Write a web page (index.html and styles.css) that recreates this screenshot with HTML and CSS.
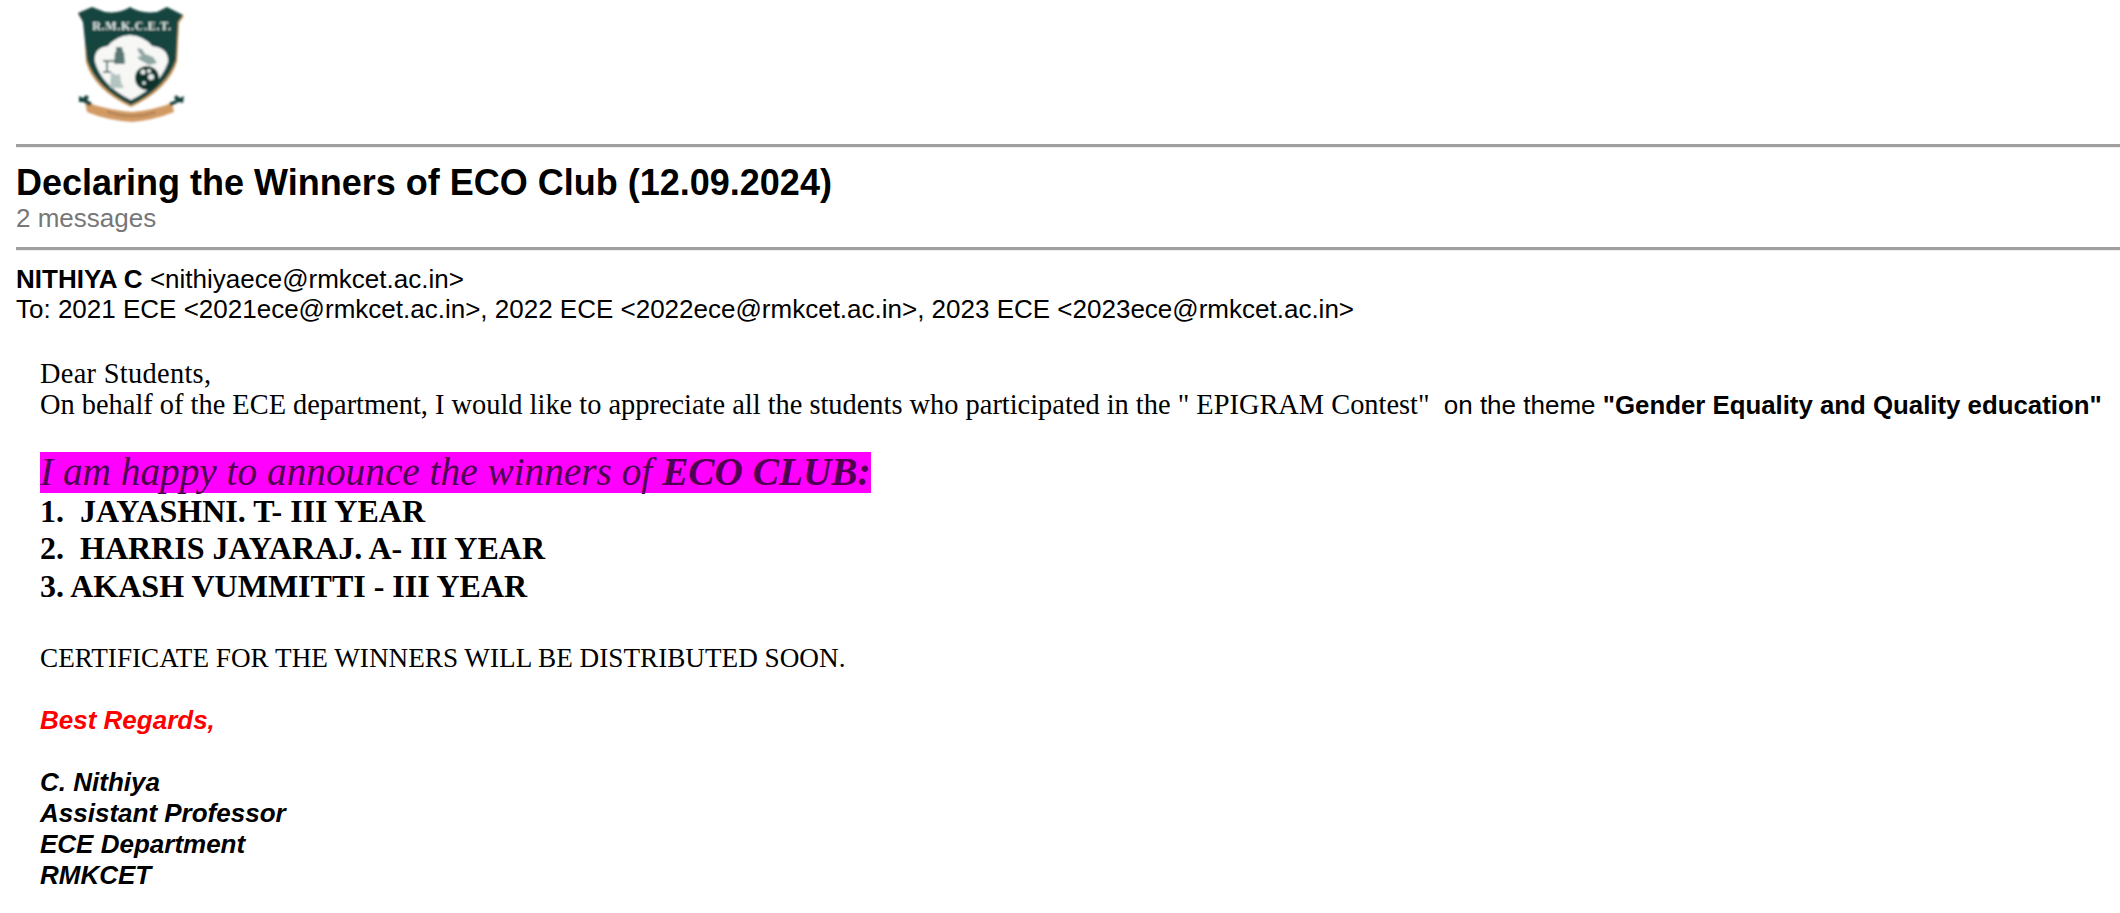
FILE: index.html
```html
<!DOCTYPE html>
<html lang="en">
<head>
<meta charset="utf-8">
<title>Declaring the Winners of ECO Club (12.09.2024)</title>
<link rel="stylesheet" href="styles.css">
</head>
<body>
<header class="logo-row">
<svg class="logo" width="170" height="130" viewBox="0 0 170 130" aria-label="RMKCET crest">
  <defs><filter id="soft"><feGaussianBlur stdDeviation="0.8"/></filter></defs>
  <g filter="url(#soft)">
    <path d="M28 14 L42 8 L55 13 Q70 15 81 8 Q92 15 107 13 L118 8 L134 16 L129 23 L127 62 Q118 90 81 107 Q44 90 36 62 L34 23 Z" fill="#c99a5e"/>
    <path d="M28 13 L42 7 L55 12 Q70 14 80 7 Q91 14 107 12 L117 7 L133 15 L128 22 L126 60 Q116 88 81 105 Q46 88 37 60 L33 22 Z" fill="#12443f"/>
    <path d="M45 62 Q43 48 58 46 Q66 36 80 35 Q94 36 102 46 Q119 48 118 62 Q110 86 81 100 Q52 86 45 62 Z" fill="#f7f8f6"/>
    <text x="82" y="30" class="crest-text">R.M.K.C.E.T.</text>
    <path d="M66 47 h6 l1 5 h1 l1 12 h-11 l1 -12 h1 Z" fill="#5a7772"/>
    <path d="M53 61 h12 M57 61 v11 M53 72 h8" stroke="#5a7772" stroke-width="2" fill="none"/>
    <path d="M87 48 l5 1 l3 5 l8 3 l4 6 l-8 2 l-9 -5 l-3 -3 l5 -1 l-3 -3 Z" fill="#8fa6a2"/>
    <path d="M61 72 l5 3 l4 -1 l1 8 l3 6 h-14 Z" fill="#b4c4c1"/>
    <circle cx="97" cy="78" r="12" fill="#10302c"/>
    <circle cx="93" cy="72" r="2.5" fill="#e5ebe9"/><circle cx="99" cy="71" r="2" fill="#e5ebe9"/><circle cx="101" cy="77" r="3" fill="#e5ebe9"/><circle cx="94" cy="83" r="1.8" fill="#e5ebe9"/>
    <path d="M35 102 Q58 110 82 112 Q104 110 122 103 L124 112 Q104 120 82 122 Q56 120 37 112 Z" fill="#d29a63"/>
    <path d="M58 112 Q82 120 106 112" stroke="#8a6a45" stroke-width="2" stroke-dasharray="2 1.5" fill="none"/>
    <path d="M29 96 l4 2 l3 -3 l3 2 l-2 3 l5 3 l-2 3 l-7 -4 l-4 0 Z M134 96 l-4 2 l-4 -3 l-2 3 l2 2 l-7 3 l2 3 l8 -4 l4 1 Z" fill="#17423d"/>
  </g>
</svg>
</header>
<hr class="rule">
<h1 class="subject">Declaring the Winners of ECO Club (12.09.2024)</h1>
<div class="count">2 messages</div>
<hr class="rule">
<div class="from"><b>NITHIYA C</b> &lt;nithiyaece@rmkcet.ac.in&gt;</div>
<div class="to">To: 2021 ECE &lt;2021ece@rmkcet.ac.in&gt;, 2022 ECE &lt;2022ece@rmkcet.ac.in&gt;, 2023 ECE &lt;2023ece@rmkcet.ac.in&gt;</div>
<main class="message">
  <p class="line dear">Dear Students,</p>
  <p class="line">On behalf of the ECE department, I would like to appreciate all the students who participated in the " EPIGRAM Contest"&nbsp; <span class="sans">on the theme <b class="theme">"Gender Equality and Quality education"</b></span></p>
  <p class="line">&nbsp;</p>
  <p class="announce"><mark class="highlight">I am happy to announce the winners of <b>ECO CLUB:</b></mark></p>
  <p class="winner">1.&nbsp; JAYASHNI. T- III YEAR</p>
  <p class="winner">2.&nbsp; HARRIS JAYARAJ. A- III YEAR</p>
  <p class="winner">3. AKASH VUMMITTI - III YEAR</p>
  <p class="line gap">&nbsp;</p>
  <p class="line caps">CERTIFICATE FOR THE WINNERS WILL BE DISTRIBUTED SOON.</p>
  <p class="line">&nbsp;</p>
  <p class="sig regards">Best Regards,</p>
  <p class="sig">&nbsp;</p>
  <p class="sig">C. Nithiya</p>
  <p class="sig">Assistant Professor</p>
  <p class="sig">ECE Department</p>
  <p class="sig">RMKCET</p>
</main>
</body>
</html>
```

FILE: styles.css
```css
html, body { margin: 0; padding: 0; background: #fff; overflow: hidden; }
body { padding-left: 16px; font-family: "Liberation Sans", Arial, sans-serif; color: #000; height: 913px; }
.logo-row { height: 144px; }
.logo { display: block; margin-left: 34px; }
.rule { border: 0; border-top: 3px solid #a0a0a0; border-bottom: 1px solid #eee; margin: 0; height: 0; }
.subject { margin: 0; padding-top: 15px; font-size: 36px; line-height: 39px; font-weight: bold; }
.count { font-size: 26px; line-height: 32px; color: #777; margin-bottom: 13px; }
.from, .to { font-size: 26px; line-height: 30px; }
.from { margin-top: 13px; }
.message { padding-left: 24px; margin-top: 34px; font-family: "Liberation Serif", "Times New Roman", serif; white-space: nowrap; }
.message p { margin: 0; }
.line { font-size: 28.4px; line-height: 31px; }
.dear { letter-spacing: 0.3px; }
.caps { font-size: 27.2px; }
.gap { line-height: 38.5px; }
.sans { font-family: "Liberation Sans", Arial, sans-serif; font-size: 26px; }
.theme { font-size: 25.8px; }
.announce { font-size: 39.3px; line-height: 41px; font-style: italic; }
.highlight { display: inline-block; background: #f0f; color: #500050; }
.winner { font-size: 32px; line-height: 37.3px; font-weight: bold; }
.sig { font-family: "Liberation Sans", Arial, sans-serif; font-size: 26px; line-height: 31px; font-weight: bold; font-style: italic; }
.regards { color: #f00; }
.crest-text { font: bold 12px "Liberation Serif", serif; fill: #e6ece9; text-anchor: middle; letter-spacing: 0.7px; }
```
